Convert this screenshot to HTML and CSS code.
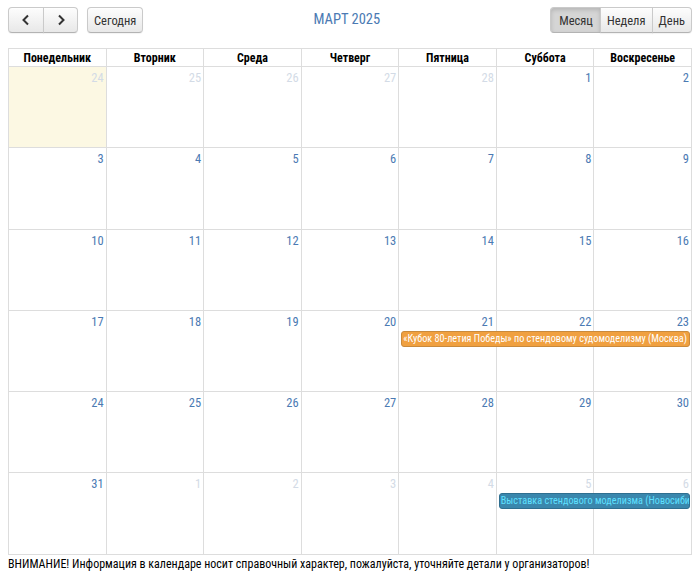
FILE: index.html
```html
<!DOCTYPE html>
<html lang="ru">
<head>
    <meta charset="UTF-8">
    <title>Календарь</title>
    <link rel="stylesheet" href="styles.css">
</head>
<body>
    <div class="calendar">
        <div class="toolbar">
            <div class="left">
                <div class="btn-group">
                    <button class="btn nav-btn">
                        <svg width="10" height="12" viewBox="0 0 10 12"><path d="M7 1.5 L2.5 6 L7 10.5" fill="none" stroke="#333" stroke-width="2"/></svg>
                    </button>
                    <button class="btn nav-btn">
                        <svg width="10" height="12" viewBox="0 0 10 12"><path d="M3 1.5 L7.5 6 L3 10.5" fill="none" stroke="#333" stroke-width="2"/></svg>
                    </button>
                </div>
                <button class="btn today">Сегодня</button>
            </div>
            <h2 class="title">МАРТ 2025</h2>
            <div class="btn-group right">
                <button class="btn active">Месяц</button>
                <button class="btn">Неделя</button>
                <button class="btn">День</button>
            </div>
        </div>
        <table class="grid">
            <thead>
                <tr>
                    <th>Понедельник</th>
                    <th>Вторник</th>
                    <th>Среда</th>
                    <th>Четверг</th>
                    <th>Пятница</th>
                    <th>Суббота</th>
                    <th>Воскресенье</th>
                </tr>
            </thead>
            <tbody id="weeks"></tbody>
        </table>
        <p class="note">ВНИМАНИЕ! Информация в календаре носит справочный характер, пожалуйста, уточняйте детали у организаторов!</p>
    </div>
    <script src="script.js"></script>
</body>
</html>
```

FILE: styles.css
```css
body {
    margin: 0;
    font-family: "Roboto Condensed", Roboto, sans-serif;
    font-stretch: condensed;
    font-size: 12px;
    color: #000;
    background: #fff;
}

.calendar {
    padding: 7px 8px 8px;
}

.toolbar {
    display: flex;
    align-items: center;
    justify-content: space-between;
    height: 26px;
    margin-bottom: 15px;
}

.left {
    display: flex;
    gap: 9px;
}

.btn-group {
    display: flex;
}

.btn {
    height: 26px;
    padding: 0 6px;
    font-family: inherit;
    font-stretch: condensed;
    font-size: 12.5px;
    color: #333;
    background: linear-gradient(#fdfdfd, #e8e8e8);
    border: 1px solid #cacaca;
    border-bottom-color: #b3b3b3;
    border-radius: 4px;
    box-shadow: inset 0 1px 0 rgba(255,255,255,0.6), 0 1px 1px rgba(0,0,0,0.05);
    cursor: pointer;
}

.btn-group .btn {
    border-radius: 0;
}

.btn-group .btn + .btn {
    margin-left: -1px;
}

.btn-group .btn:first-child {
    border-radius: 4px 0 0 4px;
}

.btn-group .btn:last-child {
    border-radius: 0 4px 4px 0;
}

.nav-btn {
    width: 35px;
    display: flex;
    align-items: center;
    justify-content: center;
}

.nav-btn:first-child {
    width: 36px;
}

.btn.active {
    background: #d5d5d5;
    box-shadow: inset 0 2px 4px rgba(0,0,0,0.15);
}

.right .btn:first-child {
    padding: 0 7px 0 8px;
}

.title {
    margin: 0 0 2px;
    font-size: 14.5px;
    font-weight: normal;
    color: #4b7ab3;
}

.grid {
    width: 100%;
    border-collapse: collapse;
    table-layout: fixed;
}

.grid th, .grid td {
    border: 1px solid #ddd;
}

.grid th {
    height: 17px;
    font-size: 12px;
    font-weight: bold;
    padding: 0;
}

.grid td {
    height: 80.3px;
    vertical-align: top;
    padding: 0;
}

.day-num {
    text-align: right;
    padding: 4px 2px 0 0;
    font-size: 12.5px;
    color: #4b7ab3;
    line-height: 14px;
}

.other .day-num {
    color: #d3dbe6;
}

.today-cell {
    background: #fcf8e3;
}

.event-row {
    position: relative;
    height: 16px;
    margin-top: 2px;
}

.event {
    position: absolute;
    top: 0;
    left: 2px;
    height: 14px;
    line-height: 14px;
    font-size: 10.2px;
    color: #fff;
    border: 1px solid #3a87ad;
    border-radius: 3px;
    white-space: nowrap;
    overflow: hidden;
    z-index: 1;
    padding-left: 1px;
}

.event.orange {
    background: #f0a040;
    border-color: #c98a3c;
}

.event.blue {
    background: #3a87ad;
    border-color: #2f6f90;
    color: #5ee0ff;
}

.note {
    margin: 2px 0 0;
    font-size: 12px;
}
```

FILE: script.js
```js
const weeks = [
    [24, 25, 26, 27, 28, 1, 2],
    [3, 4, 5, 6, 7, 8, 9],
    [10, 11, 12, 13, 14, 15, 16],
    [17, 18, 19, 20, 21, 22, 23],
    [24, 25, 26, 27, 28, 29, 30],
    [31, 1, 2, 3, 4, 5, 6]
];

const events = [
    { week: 3, day: 4, span: 3, text: '«Кубок 80-летия Победы» по стендовому судомоделизму (Москва)', color: 'orange' },
    { week: 5, day: 5, span: 2, text: 'Выставка стендового моделизма (Новосибирск)', color: 'blue' }
];

const body = document.getElementById('weeks');

weeks.forEach((week, w) => {
    const row = document.createElement('tr');
    week.forEach((num, d) => {
        const cell = document.createElement('td');
        const other = (w === 0 && num > 7) || (w === 5 && num < 7);
        if (other) cell.classList.add('other');
        if (w === 0 && d === 0) cell.classList.add('today-cell');
        cell.innerHTML = `<div class="day-num">${num}</div>`;
        const ev = events.find(e => e.week === w && e.day === d);
        if (ev) {
            const wrap = document.createElement('div');
            wrap.className = 'event-row';
            const el = document.createElement('div');
            el.className = `event ${ev.color}`;
            el.style.width = `calc(${ev.span * 100}% + ${ev.span - 1}px - 6px)`;
            el.textContent = ev.text;
            wrap.appendChild(el);
            cell.appendChild(wrap);
        }
        row.appendChild(cell);
    });
    body.appendChild(row);
});
```
